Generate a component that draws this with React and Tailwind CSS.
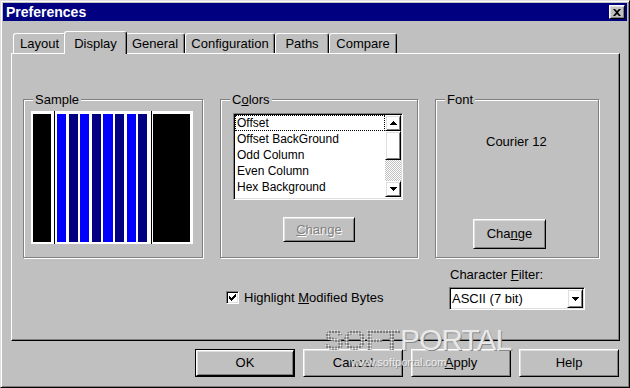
const RAISED = "border border-t-white border-l-white border-r-black border-b-black shadow-[inset_1px_1px_0_#dfdfdf,inset_-1px_-1px_0_#808080]";
const SUNKEN = "border border-t-[#808080] border-l-[#808080] border-r-white border-b-white shadow-[inset_1px_1px_0_#000,inset_-1px_-1px_0_#dfdfdf]";
const ETCHED = "border border-[#808080] shadow-[inset_1px_1px_0_#fff,1px_1px_0_#fff]";

const tabs = [
  { label: "Layout", w: "w-[53px]" },
  { label: "Display", w: "w-[63px]", active: true },
  { label: "General", w: "w-[60px]" },
  { label: "Configuration", w: "w-[90px]" },
  { label: "Paths", w: "w-[54px]" },
  { label: "Compare", w: "w-[68px]" },
];

const sampleCols = [
  { c: "bg-[#0000ff]", m: "ml-[2px]", w: "w-[9px]" },
  { c: "bg-[#000080]", m: "ml-[3px]", w: "w-[9px]" },
  { c: "bg-[#0000ff]", m: "ml-[2px]", w: "w-[9px]" },
  { c: "bg-[#000080]", m: "ml-[3px]", w: "w-[9px]" },
  { c: "bg-[#0000ff]", m: "ml-[2px]", w: "w-[10px]" },
  { c: "bg-[#000080]", m: "ml-[2px]", w: "w-[9px]" },
  { c: "bg-[#0000ff]", m: "ml-[3px]", w: "w-[9px]" },
  { c: "bg-[#000080]", m: "ml-[2px]", w: "w-[9px]" },
];

const colorItems = ["Offset", "Offset BackGround", "Odd Column", "Even Column", "Hex Background", "ASCII"];

function Group({ label, className, children }) {
  return (
    <div className={`relative ${ETCHED} ${className}`}>
      <span className="absolute left-[9px] -top-[8px] bg-[#c0c0c0] px-[2px] text-[13px] leading-[15px]">{label}</span>
      {children}
    </div>
  );
}

function Arrow({ down }) {
  return (
    <svg width="7" height="4" viewBox="0 0 7 4" className="block">
      <path d={down ? "M0 0H7L3.5 4Z" : "M0 4H7L3.5 0Z"} fill="black" shapeRendering="crispEdges" />
    </svg>
  );
}

function Button({ children, className = "", isDefault }) {
  if (isDefault) {
    return (
      <div className={`border border-black ${className}`}>
        <div className={`${RAISED} flex h-full w-full items-center justify-center text-[13px]`}>{children}</div>
      </div>
    );
  }
  return <div className={`${RAISED} flex items-center justify-center text-[13px] ${className}`}>{children}</div>;
}

export default function App() {
  return (
    <div className="relative h-[388px] w-[630px] select-none overflow-hidden border border-t-[#dfdfdf] border-l-[#dfdfdf] border-r-black border-b-black bg-[#c0c0c0] p-[2px] font-['Liberation_Sans',Arial,sans-serif] text-black shadow-[inset_1px_1px_0_#fff,inset_-1px_-1px_0_#808080]">
      {/* title bar */}
      <div className="flex h-[18px] items-center justify-between bg-[#000080] pl-[3px] pr-[2px]">
        <span className="text-[14px] font-bold leading-[18px] text-white">Preferences</span>
        <div className={`${RAISED} flex h-[14px] w-[16px] items-center justify-center bg-[#c0c0c0]`}>
          <svg width="8" height="7" viewBox="0 0 8 7">
            <path d="M0 0H2L4 2L6 0H8L5 3.5L8 7H6L4 5L2 7H0L3 3.5Z" fill="black" />
          </svg>
        </div>
      </div>

      {/* tabs */}
      <div className="mt-[10px] flex h-[22px] items-end pl-[10px]">
        {tabs.map((t) =>
          t.active ? (
            <div key={t.label} className={`relative z-10 -mx-[2px] -mb-px flex h-[23px] ${t.w} items-start justify-center rounded-t-[3px] border-l border-t border-r border-l-white border-t-white border-r-black bg-[#c0c0c0] pt-[2px] text-[13px] shadow-[inset_-1px_0_0_#808080]`}>
              {t.label}
            </div>
          ) : (
            <div key={t.label} className={`flex h-[20px] ${t.w} items-center justify-center rounded-t-[3px] border-l border-t border-r border-l-white border-t-white border-r-black text-[13px] shadow-[inset_-1px_0_0_#808080]`}>
              {t.label}
            </div>
          )
        )}
      </div>

      {/* panel */}
      <div className="ml-[8px] h-[288px] w-[609px] border border-t-white border-l-white border-r-black border-b-black shadow-[inset_-1px_-1px_0_#808080]">
        <div className="ml-[11px] mt-[45px] flex gap-[17px]">
          <Group label="Sample" className="h-[159px] w-[180px] pl-[7px] pt-[11px]">
            <div className="flex h-[133px] w-[162px] bg-white pb-[2px] pl-[2px] pt-[3px]">
              <div className="w-[18px] bg-black" />
              <div className="-mb-[2px] -mt-[3px] ml-[3px] w-px bg-black" />
              {sampleCols.map((col, i) => (
                <div key={i} className={`${col.w} ${col.m} ${col.c}`} />
              ))}
              <div className="-mb-[2px] -mt-[3px] ml-[4px] w-px bg-black" />
              <div className="ml-px w-[37px] bg-black" />
            </div>
          </Group>

          <Group
            label={<>C<u>o</u>lors</>}
            className="flex h-[159px] w-[198px] flex-col items-start pl-[12px] pt-[13px]"
          >
            <div className={`${SUNKEN} flex h-[87px] w-[170px] bg-white p-px`}>
              <div className="h-[82px] w-[150px] overflow-hidden">
                {colorItems.map((item, i) => (
                  <div key={item} className={`h-[16px] pl-px text-[12px] leading-[14px] ${i === 0 ? "border border-dotted border-black" : "border border-transparent"}`}>
                    {item}
                  </div>
                ))}
              </div>
              <div className="flex h-[82px] w-[16px] flex-col">
                <div className={`${RAISED} flex h-[16px] items-center justify-center`}>
                  <Arrow />
                </div>
                <div className={`${RAISED} h-[29px]`} />
                <div className="h-[21px] bg-[repeating-conic-gradient(#c0c0c0_0_25%,#fff_0_50%)] bg-[length:2px_2px]" />
                <div className={`${RAISED} flex h-[16px] items-center justify-center`}>
                  <Arrow down />
                </div>
              </div>
            </div>
            <Button className="ml-[50px] mt-[17px] h-[25px] w-[72px] text-[#808080] [text-shadow:1px_1px_0_#fff]">
              <span><u>C</u>hange</span>
            </Button>
          </Group>

          <Group label="Font" className="flex h-[159px] w-[164px] flex-col items-start pt-[34px]">
            <span className="ml-[50px] text-[13px] leading-[15px]">Courier 12</span>
            <Button className="ml-[37px] mt-[70px] h-[30px] w-[73px]">
              <span>Cha<u>n</u>ge</span>
            </Button>
          </Group>
        </div>

        <div className="ml-[11px] flex">
          <div className="w-[197px]" />
          <div className="flex w-[215px] items-center pl-[6px] pt-[27px]">
            <div className="flex h-[13px] w-[13px] items-center justify-center border border-t-[#808080] border-l-[#808080] border-r-white border-b-white bg-white shadow-[inset_1px_1px_0_#000,inset_-1px_-1px_0_#dfdfdf]">
              <svg width="7" height="7" viewBox="0 0 7 7" shapeRendering="crispEdges">
                <path d="M0 2h1v1h1v1h1v-1h1v-1h1v-1h1v-1h1v3h-1v1h-1v1h-1v1h-1v1h-1v-1h-1v-1h-1v-1h-1Z" fill="black" />
              </svg>
            </div>
            <span className="ml-[5px] text-[13px] leading-[15px]">
              Highlight <u>M</u>odified Bytes
            </span>
          </div>
          <div className="flex flex-col items-start pl-[14px] pt-[9px]">
            <span className="ml-px text-[13px] leading-[15px]">
              Character <u>F</u>ilter:
            </span>
            <div className={`${SUNKEN} mt-[5px] flex h-[23px] w-[136px] items-stretch bg-white p-px`}>
              <span className="flex-1 pl-px text-[13px] leading-[19px]">ASCII (7 bit)</span>
              <div className={`${RAISED} flex w-[16px] items-center justify-center`}>
                <Arrow down />
              </div>
            </div>
          </div>
        </div>
      </div>

      {/* dialog buttons */}
      <div className="mt-[8px] flex justify-end gap-[8px] pr-[8px]">
        <Button isDefault className="h-[28px] w-[100px]">OK</Button>
        <Button className="h-[28px] w-[100px]">Cancel</Button>
        <Button className="h-[28px] w-[100px]">
          <span><u>A</u>pply</span>
        </Button>
        <Button className="h-[28px] w-[100px]">Help</Button>
      </div>

      {/* watermark */}
      <div className="pointer-events-none absolute left-[323px] top-[322px] flex items-baseline text-[30px] leading-[34px] tracking-[-1px]">
        <span className="bg-[radial-gradient(circle,#f2f2f2_40%,#7c7c7c_55%)] bg-[length:3px_3px] bg-clip-text font-black text-transparent">SOFT</span>
        <span className="text-[#e9e9e9] [text-shadow:1px_1px_0_#8a8a8a]">PORTAL</span>
      </div>
      <span className="pointer-events-none absolute left-[350px] top-[355px] text-[11px] leading-[13px] text-[#ececec] [text-shadow:1px_1px_0_#888]">
        www.softportal.com
      </span>
    </div>
  );
}
